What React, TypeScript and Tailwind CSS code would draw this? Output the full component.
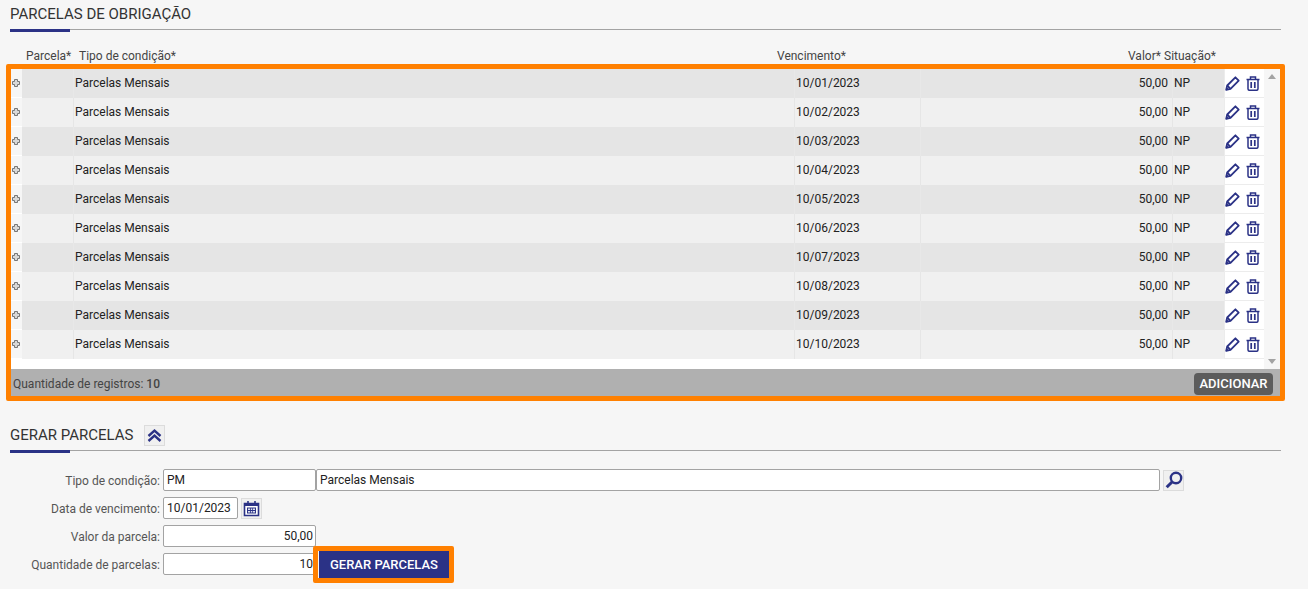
const rows = [
  "10/01/2023",
  "10/02/2023",
  "10/03/2023",
  "10/04/2023",
  "10/05/2023",
  "10/06/2023",
  "10/07/2023",
  "10/08/2023",
  "10/09/2023",
  "10/10/2023",
];

const cols = "grid grid-cols-[11px_51px_721px_126px_252px_52px_40px]";

function PlusIcon() {
  return (
    <svg width="8" height="8" viewBox="0 0 8 8" className="shrink-0">
      <path d="M2.500.5h3v2h2v3h-2v2h-3v-2h-2v-3h2z" fill="#d8d8d8" stroke="#777" strokeWidth="1" />
    </svg>
  );
}

function PencilIcon() {
  return (
    <svg width="15" height="15" viewBox="0 0 15 15" fill="none" stroke="#2b3286" strokeWidth="1.8" strokeLinejoin="round">
      <path d="M1.200 13.800l1-4.300L10.400 1.300l3.300 3.300-8.200 8.200z" />
      <path d="M2.200 9.500l3.300 3.300" />
      <path d="M.8 14.200l3.200-.8-2.400-2.400z" fill="#2b3286" stroke="none" />
    </svg>
  );
}

function TrashIcon() {
  return (
    <svg width="14" height="15" viewBox="0 0 14 15" fill="none" stroke="#2b3286" strokeWidth="1.500">
      <path d="M.5 3.500h13" />
      <path d="M4.500 3.200V1h5v2.200" />
      <path d="M2 3.500v9.300c0 .9.500 1.500 1.400 1.500h7.200c.9 0 1.400-.6 1.400-1.500V3.500" />
      <path d="M5.200 6v6M8.800 6v6" strokeWidth="1.700" />
    </svg>
  );
}

function CalendarIcon() {
  return (
    <svg width="17" height="17" viewBox="0 0 17 17">
      <path d="M1.500 3.500h14v12h-14z" fill="#fff" stroke="#2b3286" strokeWidth="1.600" />
      <path d="M1 3h15v3H1z" fill="#2b3286" />
      <path d="M5 1v3M12 1v3" stroke="#2b3286" strokeWidth="1.600" />
      <path d="M4 7.500h9v6H4z" fill="#2b3286" />
      <path
        d="M5 8.500h2v1.500H5zM7.800 8.500h1.500v1.500H7.800zM10 8.500h2v1.500h-2zM5 11h2v1.500H5zM7.800 11h1.500v1.500H7.800zM10 11h2v1.500h-2z"
        fill="#dfe1f0"
      />
    </svg>
  );
}

function ChevronsIcon() {
  return (
    <svg width="15" height="13" viewBox="0 0 15 13" fill="none" stroke="#2b3286" strokeWidth="2.400">
      <path d="M1.500 7L7.500 1.700 13.500 7" />
      <path d="M1.500 12L7.500 6.700 13.500 12" />
    </svg>
  );
}

function SearchIcon() {
  return (
    <svg width="18" height="18" viewBox="0 0 18 18" fill="none" stroke="#2b3286">
      <circle cx="11" cy="7" r="5.200" strokeWidth="2.400" />
      <path d="M7 11L1.700 16.300" strokeWidth="3" />
    </svg>
  );
}

function SectionTitle({ title, children }: { title: string; children?: React.ReactNode }) {
  return (
    <div className="ml-[10px] mr-[27px] border-b border-[#a3a3a3] relative">
      <div className="h-[29px] flex items-center gap-[11px] text-[15px] text-[#333]">
        <span>{title}</span>
        {children}
      </div>
      <div className="absolute left-0 bottom-[-3px] w-[60px] h-[3px] bg-[#2b3286]" />
    </div>
  );
}

function Field({ label, children }: { label: string; children: React.ReactNode }) {
  return (
    <div className="flex items-center h-[22px]">
      <label className="w-[160px] pt-[1px] text-right text-[12px] text-[#555] shrink-0">{label}</label>
      <div className="ml-[3px] flex items-center">{children}</div>
    </div>
  );
}

const inputClass =
  "h-[22px] bg-white border border-[#a3a3a3] rounded-[2px] px-[3px] text-[12px] text-[#222] flex items-center shrink-0";

export default function App() {
  return (
    <div className="w-[1308px] h-[589px] overflow-hidden bg-[#f6f6f6] font-['Roboto',sans-serif]">
      <SectionTitle title="PARCELAS DE OBRIGAÇÃO" />

      <div className="h-[16px] mt-[18px] ml-[26px] text-[12px] leading-[16px] text-[#444] flex">
        <span className="w-[53px]">Parcela*</span>
        <span className="w-[698px]">Tipo de condição*</span>
        <span className="w-[351px]">Vencimento*</span>
        <span className="w-[36px]">Valor*</span>
        <span>Situação*</span>
      </div>

      <div className="ml-[6px] w-[1279px] h-[337px] border-[5px] border-[#ff8000] rounded-[2px] bg-white flex flex-col">
        <div className="flex h-[300px]">
          <div className="w-[1253px]">
            {rows.map((date, i) => {
              const bg = i % 2 ? "bg-[#f0f0f0] border-[#e6e6e6]" : "bg-[#e5e5e5] border-[#e8e8e8]";
              return (
                <div key={date} className={`${cols} h-[29px] text-[12px] text-[#222]`}>
                  <div className="bg-[#f6f6f6] flex items-center justify-center pr-[1px] border-b border-white">
                    <PlusIcon />
                  </div>
                  <div className={bg} />
                  <div className={`${bg} flex items-center pl-[1px] pb-[2px] border-l`}>Parcelas Mensais</div>
                  <div className={`${bg} flex items-center pl-[1px] pb-[2px] border-l`}>{date}</div>
                  <div className={`${bg} flex items-center justify-end pr-[4px] pb-[2px] border-l`}>50,00</div>
                  <div className={`${bg} flex items-center pl-[1px] pb-[2px] border-l`}>NP</div>
                  <div className="bg-white border-l border-b border-[#ececec] flex items-center gap-[6px]">
                    <PencilIcon />
                    <TrashIcon />
                  </div>
                </div>
              );
            })}
          </div>
          <div className="w-[16px] flex flex-col items-center justify-between py-[5px] bg-[#f6f6f6]">
            <div className="w-0 h-0 border-x-[4px] border-x-transparent border-b-[5px] border-b-[#a3a3a3]" />
            <div className="w-0 h-0 border-x-[4px] border-x-transparent border-t-[5px] border-t-[#a3a3a3]" />
          </div>
        </div>
        <div className="flex-1 bg-[#b0b0b0] flex items-center justify-between pl-[2px] pr-[7px] pt-[2px] text-[12px] text-[#444]">
          <span>
            Quantidade de registros: <span className="font-medium">10</span>
          </span>
          <button className="h-[22px] w-[79px] rounded-[4px] bg-[#5c5c5c] text-white text-[13px] font-medium">
            ADICIONAR
          </button>
        </div>
      </div>

      <div className="mt-[20px]">
        <SectionTitle title="GERAR PARCELAS">
          <button className="w-[21px] h-[21px] bg-[#f0f0f0] border border-[#dcdcdc] flex items-center justify-center">
            <ChevronsIcon />
          </button>
        </SectionTitle>
      </div>

      <div className="mt-[18px] flex flex-col gap-[6px]">
        <Field label="Tipo de condição:">
          <div className={`${inputClass} w-[153px]`}>PM</div>
          <div className={`${inputClass} w-[844px]`}>Parcelas Mensais</div>
          <button className="ml-[3px] w-[21px] h-[21px] bg-[#f0f0f0] border border-[#dcdcdc] flex items-center justify-center">
            <SearchIcon />
          </button>
        </Field>
        <Field label="Data de vencimento:">
          <div className={`${inputClass} w-[75px]`}>10/01/2023</div>
          <button className="ml-[3px] w-[21px] h-[21px] bg-[#f0f0f0] border border-[#dcdcdc] flex items-center justify-center">
            <CalendarIcon />
          </button>
        </Field>
        <Field label="Valor da parcela:">
          <div className={`${inputClass} w-[153px] justify-end pr-[2px]`}>50,00</div>
        </Field>
        <Field label="Quantidade de parcelas:">
          <div className={`${inputClass} w-[153px] justify-end pr-[2px]`}>10</div>
          <div className="-ml-[3px] mt-[1px] border-[5px] border-[#ff8000] rounded-[2px] w-[141px] h-[37px] relative z-10">
            <button className="ml-[1px] w-[130px] h-full bg-[#2b3286] text-white text-[13px] font-medium">
              GERAR PARCELAS
            </button>
          </div>
        </Field>
      </div>
    </div>
  );
}
